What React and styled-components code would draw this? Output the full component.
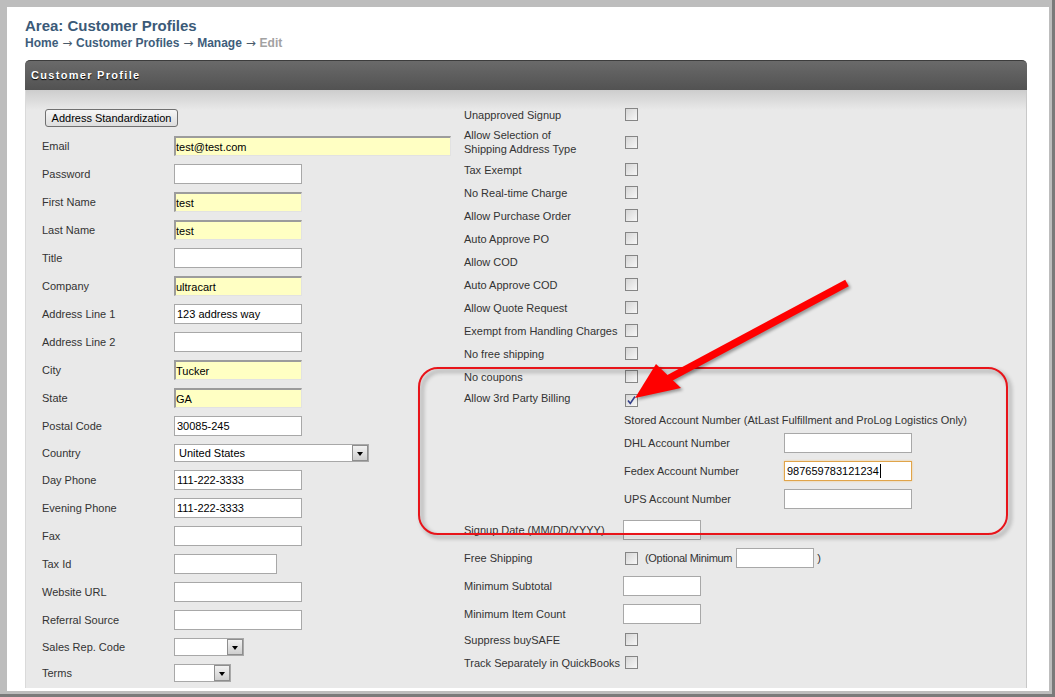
import React from "react";
import styled, { createGlobalStyle } from "styled-components";

const GlobalStyle = createGlobalStyle`
    body {
        margin: 0;
        font-family: "Liberation Sans", Arial, sans-serif;
    }
`;

const leftRows = [
    { label: "Email", value: "test@test.com", hl: true, w: 277 },
    { label: "Password" },
    { label: "First Name", value: "test", hl: true },
    { label: "Last Name", value: "test", hl: true },
    { label: "Title" },
    { label: "Company", value: "ultracart", hl: true },
    { label: "Address Line 1", value: "123 address way" },
    { label: "Address Line 2" },
    { label: "City", value: "Tucker", hl: true },
    { label: "State", value: "GA", hl: true },
    { label: "Postal Code", value: "30085-245" },
    { label: "Country", select: "United States", w: 195 },
    { label: "Day Phone", value: "111-222-3333" },
    { label: "Evening Phone", value: "111-222-3333" },
    { label: "Fax" },
    { label: "Tax Id", w: 103 },
    { label: "Website URL" },
    { label: "Referral Source" },
    { label: "Sales Rep. Code", select: "", w: 70 },
    { label: "Terms", select: "", w: 57 },
];

const flagRows = [
    "Tax Exempt",
    "No Real-time Charge",
    "Allow Purchase Order",
    "Auto Approve PO",
    "Allow COD",
    "Auto Approve COD",
    "Allow Quote Request",
    "Exempt from Handling Charges",
    "No free shipping",
    "No coupons",
];

function Select({ w, text }) {
    return (
        <SelectBox $w={w}>
            <SelectText>{text}</SelectText>
            <SelectArrow />
        </SelectBox>
    );
}

function Check({ checked }) {
    return (
        <CheckBox>
            {checked && (
                <svg width="11" height="11" viewBox="0 0 11 11">
                    <polyline points="2,5.5 4.3,8.5 9,1.5" fill="none" stroke="#34408a" strokeWidth="1.6" />
                </svg>
            )}
        </CheckBox>
    );
}

export default function App() {
    return (
        <Shell>
            <GlobalStyle />
            <Frame>
                <Screen>
                    <Title>Area: Customer Profiles</Title>
                    <Crumbs>
                        Home <Arrow>→</Arrow> Customer Profiles <Arrow>→</Arrow> Manage <Arrow>→</Arrow> <Current>Edit</Current>
                    </Crumbs>

                    <Panel>
                        <PanelHeader>Customer Profile</PanelHeader>
                        <PanelBody>
                            <LeftCol>
                                <Button>Address Standardization</Button>
                                {leftRows.map(row => (
                                    <Row key={row.label}>
                                        <Label>{row.label}</Label>
                                        {row.select !== undefined ? (
                                            <Select w={row.w} text={row.select} />
                                        ) : (
                                            <Input $w={row.w} $hl={row.hl} defaultValue={row.value || ""} />
                                        )}
                                    </Row>
                                ))}
                            </LeftCol>

                            <RightCol>
                                <RRow>
                                    <RLabel>Unapproved Signup</RLabel>
                                    <Check />
                                </RRow>
                                <RRow>
                                    <RLabel $tall>Allow Selection of<br />Shipping Address Type</RLabel>
                                    <Check />
                                </RRow>
                                {flagRows.map(label => (
                                    <RRow key={label}>
                                        <RLabel>{label}</RLabel>
                                        <Check />
                                    </RRow>
                                ))}

                                <BillingRow>
                                    <RLabel $top>Allow 3rd Party Billing</RLabel>
                                    <BillingCell>
                                        <Check checked />
                                        <Note>Stored Account Number (AtLast Fulfillment and ProLog Logistics Only)</Note>
                                        <SubRow>
                                            <SubLabel>DHL Account Number</SubLabel>
                                            <Input />
                                        </SubRow>
                                        <SubRow>
                                            <SubLabel>Fedex Account Number</SubLabel>
                                            <FocusField>987659783121234<Caret /></FocusField>
                                        </SubRow>
                                        <SubRow>
                                            <SubLabel>UPS Account Number</SubLabel>
                                            <Input />
                                        </SubRow>
                                    </BillingCell>
                                </BillingRow>

                                <RRow>
                                    <RLabel>Signup Date (MM/DD/YYYY)</RLabel>
                                    <Input $w={78} />
                                </RRow>
                                <RRow>
                                    <RLabel>Free Shipping</RLabel>
                                    <Check />
                                    <Inline $gap={7} $tight>(Optional Minimum</Inline>
                                    <Input $w={78} $ml={4} />
                                    <Inline $gap={3}>)</Inline>
                                </RRow>
                                <RRow>
                                    <RLabel>Minimum Subtotal</RLabel>
                                    <Input $w={78} />
                                </RRow>
                                <RRow>
                                    <RLabel>Minimum Item Count</RLabel>
                                    <Input $w={78} />
                                </RRow>
                                <RRow>
                                    <RLabel>Suppress buySAFE</RLabel>
                                    <Check />
                                </RRow>
                                <RRow>
                                    <RLabel>Track Separately in QuickBooks</RLabel>
                                    <Check />
                                </RRow>
                            </RightCol>
                        </PanelBody>
                    </Panel>
                </Screen>
            </Frame>

            <Callout />
            <Pointer width="1055" height="697" viewBox="0 0 1055 697">
                <line x1="847" y1="283" x2="664" y2="381" stroke="#ff0000" strokeWidth="7.5" />
                <polygon points="635,398 656,364 681,388" fill="#ff0000" />
            </Pointer>
        </Shell>
    );
}

const Shell = styled.div`
    position: relative;
    width: 1055px;
    height: 697px;
    box-sizing: border-box;
    padding: 0 3px 3px 0;
    background-color: #7a7a7a;
    overflow: hidden;
`;

const Frame = styled.div`
    height: 100%;
    box-sizing: border-box;
    padding: 7px 3px 3px 7px;
    background-color: #bdbdbd;
`;

const Screen = styled.div`
    display: flex;
    flex-direction: column;
    height: 100%;
    box-sizing: border-box;
    padding: 10px 22px 3px 18px;
    background-color: #FFFFFF;
    overflow: hidden;
`;

const Title = styled.div`
    font-size: 15px;
    line-height: 18px;
    font-weight: bold;
    color: #3b5a78;
`;

const Crumbs = styled.div`
    height: 14px;
    margin-top: 1px;
    font-size: 12px;
    line-height: 14px;
    font-weight: bold;
    color: #3e5d7b;
`;

const Arrow = styled.span`
    margin: 0 0.5px;
    font-family: "DejaVu Sans", sans-serif;
    font-size: 12px;
    line-height: 0;
    font-weight: normal;
    color: #4a5a6a;
`;

const Current = styled.span`
    color: #a2a2a2;
`;

const Panel = styled.div`
    display: flex;
    flex-direction: column;
    flex: 1;
    min-height: 0;
    margin-top: 10px;
`;

const PanelHeader = styled.div`
    height: 29px;
    padding-left: 6px;
    border-top: 1px solid #3c3c3c;
    border-radius: 5px 5px 0 0;
    background: linear-gradient(#6a6a6a, #525252);

    color: #FFFFFF;
    font-size: 11px;
    font-weight: bold;
    line-height: 29px;
    letter-spacing: 1.3px;
    text-shadow: 0 1px 1px #000000;
`;

const PanelBody = styled.div`
    display: flex;
    flex: 1;
    min-height: 0;
    padding: 13px 0 0 16px;
    border-left: 1px solid #dadada;
    border-right: 1px solid #c8c8c8;
    background: linear-gradient(#cdcdcd 0, #e9e9e9 20px, #e9e9e9);
    overflow: hidden;
`;

const LeftCol = styled.div`
    width: 422px;
    flex-shrink: 0;
`;

const Button = styled.button`
    display: block;
    height: 18px;
    width: 133px;
    margin: 6px 0 5px 3px;
    padding: 0;
    border: 1px solid #707070;
    border-radius: 3px;
    background: linear-gradient(#f6f6f6, #dddddd);

    font-family: "Liberation Sans", Arial, sans-serif;
    font-size: 11px;
    color: #000000;
`;

const Row = styled.div`
    display: flex;
    align-items: center;
`;

const Label = styled.div`
    width: 132px;
    flex-shrink: 0;
    font-size: 11px;
    color: #333333;
`;

const Input = styled.input`
    width: ${props => props.$w || 128}px;
    height: 20px;
    box-sizing: border-box;
    margin: 4px 0 4px ${props => props.$ml || 0}px;
    padding: 0 2px;
    border: 1px solid #a8a8a8;
    background-color: #FFFFFF;
    outline: none;

    font-family: "Liberation Sans", Arial, sans-serif;
    font-size: 11px;
    color: #000000;

    ${props => props.$hl && `
        padding: 0;
        border-top: 2px solid #9c9c9c;
        border-left: 2px solid #9c9c9c;
        border-right: 1px solid #e2e2e2;
        border-bottom: 1px solid #e2e2e2;
        background-color: #ffffc3;
    `}
`;

const FocusField = styled.div`
    display: flex;
    align-items: center;
    width: 128px;
    height: 20px;
    box-sizing: border-box;
    margin: 4px 0;
    padding: 0 2px;
    border: 1px solid #e0a44a;
    box-shadow: 0 0 2px #f2c98a;
    background-color: #FFFFFF;

    font-size: 11px;
    color: #000000;
`;

const Caret = styled.span`
    width: 1px;
    height: 14px;
    margin-left: 1px;
    background-color: #000000;
`;

const SelectBox = styled.div`
    display: flex;
    align-items: center;
    width: ${props => props.$w}px;
    height: 18px;
    box-sizing: border-box;
    margin: 4px 0;
    border: 1px solid #a8a8a8;
    background-color: #FFFFFF;
`;

const SelectText = styled.div`
    flex: 1;
    padding-left: 4px;
    font-size: 11px;
    color: #000000;
`;

const SelectArrow = styled.div`
    position: relative;
    width: 16px;
    height: 16px;
    box-sizing: border-box;
    border: 1px solid #8e8e8e;
    background: linear-gradient(#f2f2f2, #cfcfcf);

    &::after {
        content: "";
        position: absolute;
        left: 4px;
        top: 6px;
        border-left: 3.5px solid transparent;
        border-right: 3.5px solid transparent;
        border-top: 4px solid #000000;
    }
`;

const RightCol = styled.div`
    flex: 1;
`;

const RRow = styled.div`
    display: flex;
    align-items: center;
    min-height: 23px;
`;

const BillingRow = styled.div`
    display: flex;
    align-items: flex-start;
    padding-bottom: 3px;
`;

const RLabel = styled.div`
    width: 159px;
    flex-shrink: 0;
    padding: ${props => (props.$tall ? "2px 0" : props.$top ? "3px 0 0" : "0")};
    font-size: 11px;
    line-height: 14px;
    color: #333333;
`;

const CheckBox = styled.span`
    display: flex;
    align-items: center;
    justify-content: center;
    width: 13px;
    height: 13px;
    box-sizing: border-box;
    margin: 5px 0 5px 2px;
    border: 1px solid #858585;
    background: linear-gradient(135deg, #d6d6d6, #f7f7f7);
`;

const BillingCell = styled.div`
    display: flex;
    flex-direction: column;
    align-items: flex-start;
    padding-top: 1px;
`;

const Note = styled.div`
    margin: 1px 0 2px 1px;
    font-size: 11px;
    line-height: 14px;
    color: #333333;
`;

const SubRow = styled.div`
    display: flex;
    align-items: center;
`;

const SubLabel = styled.div`
    width: 160px;
    padding-left: 1px;
    font-size: 11px;
    color: #333333;
`;

const Inline = styled.span`
    margin-left: ${props => props.$gap}px;
    font-size: 11px;
    letter-spacing: ${props => (props.$tight ? "-0.3px" : "0")};
    color: #333333;
`;

const Callout = styled.div`
    position: absolute;
    left: 418px;
    top: 367px;
    width: 590px;
    height: 168px;
    box-sizing: border-box;
    border: 2px solid #e8141a;
    border-radius: 20px;
    filter: drop-shadow(3px 3px 2px rgba(0, 0, 0, 0.4));
`;

const Pointer = styled.svg`
    position: absolute;
    left: 0;
    top: 0;
    pointer-events: none;
    filter: drop-shadow(2px 2px 1.5px rgba(0, 0, 0, 0.35));
`;
